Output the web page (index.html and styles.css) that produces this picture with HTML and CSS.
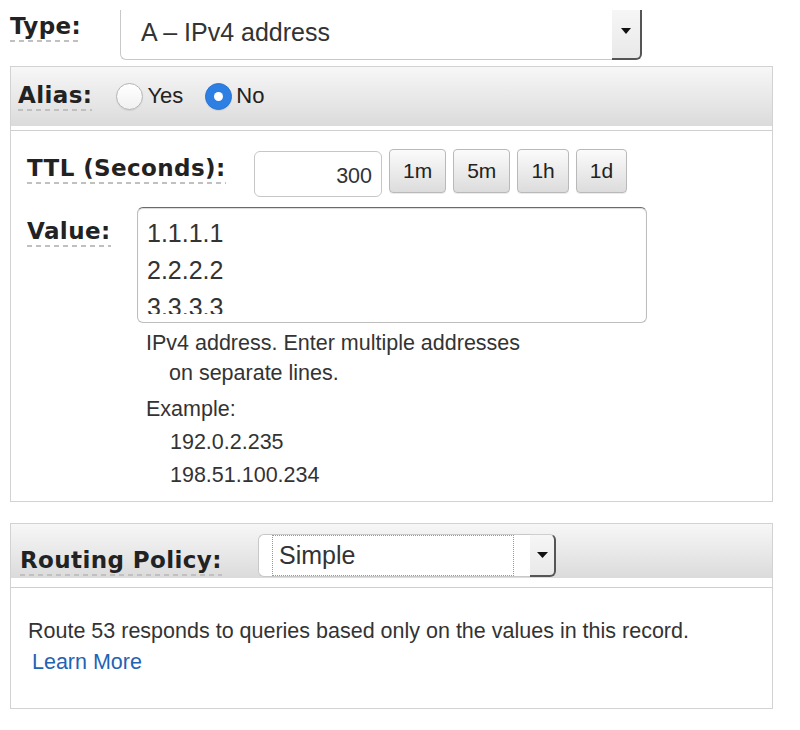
FILE: index.html
```html
<!DOCTYPE html>
<html>
<head>
<meta charset="utf-8">
<link rel="stylesheet" href="styles.css">
</head>
<body>
<div class="page">
  <div class="type-row">
    <div class="type-cell"><span class="label">Type:</span></div>
    <div class="select sel-type">
      <div class="sel-field"><span class="sel-text">A – IPv4 address</span></div>
      <div class="sel-arrow"><svg width="10" height="6" viewBox="0 0 10 6"><path d="M0 0H10L5 6Z" fill="#111"/></svg></div>
    </div>
  </div>

  <div class="panel panel-record">
    <div class="panel-head head-alias">
      <span class="label">Alias:</span>
      <div class="radios">
        <span class="radio"></span><span class="radio-text">Yes</span>
        <span class="radio checked"></span><span class="radio-text">No</span>
      </div>
    </div>
    <div class="panel-body body-record">
      <div class="ttl-row">
        <div class="ttl-cell"><span class="label">TTL (Seconds):</span></div>
        <div class="ttl-input">300</div>
        <button class="btn">1m</button>
        <button class="btn">5m</button>
        <button class="btn">1h</button>
        <button class="btn">1d</button>
      </div>
      <div class="value-row">
        <div class="value-cell"><span class="label">Value:</span></div>
        <div class="textarea">
          <div class="ta-clip">
            <div>1.1.1.1</div>
            <div>2.2.2.2</div>
            <div>3.3.3.3</div>
          </div>
        </div>
      </div>
      <div class="help">
        <div class="help-main">IPv4 address. Enter multiple addresses on separate lines.</div>
        <div class="help-example">
          <div>Example:</div>
          <div class="ex-line">192.0.2.235</div>
          <div class="ex-line">198.51.100.234</div>
        </div>
      </div>
    </div>
  </div>

  <div class="panel panel-routing">
    <div class="panel-head head-routing">
      <div class="routing-cell"><span class="label">Routing Policy:</span></div>
      <div class="select sel-routing">
        <div class="sel-field"><div class="focus-ring"><span class="sel-text">Simple</span></div></div>
        <div class="sel-arrow"><svg width="11" height="6" viewBox="0 0 11 6"><path d="M0 0H11L5.5 6Z" fill="#111"/></svg></div>
      </div>
    </div>
    <div class="panel-body body-routing">
      <div class="desc">Route 53 responds to queries based only on the values in this record.</div>
      <a class="learn" href="#">Learn More</a>
    </div>
  </div>
</div>
</body>
</html>
```
FILE: styles.css
```css
* { box-sizing: border-box; }
body {
  margin: 0;
  background: #fff;
  font-family: "Liberation Sans", Arial, sans-serif;
  color: #333;
}
.page { width: 800px; }

.label {
  display: inline-block;
  font-family: "DejaVu Sans", Verdana, sans-serif;
  font-weight: bold;
  font-size: 23px;
  letter-spacing: 0.4px;
  color: #222;
  line-height: 26px;
  padding-bottom: 3px;
  background-image: repeating-linear-gradient(to right, #c0c0c0 0 5px, transparent 5px 9px);
  background-size: 100% 2px;
  background-position: left bottom;
  background-repeat: no-repeat;
}

/* Type row */
.type-row {
  display: flex;
  align-items: flex-start;
  height: 60px;
  padding-left: 10px;
}
.type-cell { width: 110px; padding-top: 13px; }

.select { display: flex; }
.sel-field {
  flex: 1;
  display: flex;
  align-items: center;
  background: #fff;
  border: 1px solid #c8c8c8;
  border-right: none;
  border-radius: 6px 0 0 6px;
}
.sel-text { font-size: 25px; color: #333; }
.sel-arrow {
  display: flex;
  justify-content: center;
  background: linear-gradient(#f6f6f6, #e9e9e9);
  border-right: 2px solid #555;
  border-bottom: 2px solid #555;
  border-radius: 0 6px 6px 0;
}

.sel-type { margin-top: 10px; width: 522px; height: 50px; }
.sel-type .sel-field {
  border-top: none;
  border-radius: 0 0 0 6px;
  padding-left: 20px;
  padding-bottom: 4px;
}
.sel-type .sel-arrow {
  width: 30px;
  padding-top: 18px;
  border-radius: 0 0 6px 0;
}

/* Panels */
.panel {
  margin-left: 10px;
  width: 763px;
  border: 1px solid #d2d2d2;
}
.panel-record { margin-top: 6px; }
.panel-routing { margin-top: 21px; }
.panel-head {
  display: flex;
  background: linear-gradient(#f7f7f7, #dbdbdb);
  border-bottom: 4px solid #fff;
}
.panel-body { border-top: 1px solid #cfcfcf; }

.head-alias {
  height: 63px;
  align-items: center;
  padding-left: 7px;
  padding-bottom: 1px;
}
.radios {
  display: flex;
  align-items: center;
  margin-left: 24px;
}
.radio {
  width: 27px;
  height: 27px;
  border-radius: 50%;
  border: 1px solid #b5b5b5;
  background: linear-gradient(#ffffff, #f1f1f1);
  box-shadow: 0 1px 1px rgba(0,0,0,0.08);
  display: flex;
  align-items: center;
  justify-content: center;
}
.radio.checked {
  margin-left: 22px;
  background: #2d7fe3;
  border-color: #2a74d4;
}
.radio.checked::after {
  content: "";
  width: 9px;
  height: 9px;
  border-radius: 50%;
  background: #fff;
}
.radio-text { font-size: 22px; color: #222; margin-left: 4px; }

/* Record body */
.body-record { padding: 18px 0 9px 16px; }
.ttl-row { display: flex; align-items: flex-start; }
.ttl-cell { width: 227px; padding-top: 6px; }
.ttl-input {
  width: 128px;
  height: 46px;
  margin-top: 2px;
  border: 1px solid #c6c6c6;
  border-radius: 6px;
  text-align: right;
  padding: 4px 9px 0 0;
  font-size: 21.5px;
  line-height: 40px;
  color: #333;
}
.btn {
  height: 44px;
  margin: 0 0 0 7px;
  padding: 0 13px;
  border: 1px solid #b9b9b9;
  border-radius: 4px;
  background: linear-gradient(#fbfbfb, #dcdcdc);
  font-family: "Liberation Sans", Arial, sans-serif;
  font-size: 21px;
  color: #222;
  box-shadow: 0 1px 0 rgba(0,0,0,0.08);
}

.value-row { display: flex; align-items: flex-start; margin-top: 10px; }
.value-cell { width: 110px; padding-top: 11px; }
.textarea {
  width: 510px;
  height: 116px;
  border: 1px solid #bdbdbd;
  border-top-color: #6a6a6a;
  border-radius: 6px;
  box-shadow: inset 0 1px 1px rgba(0,0,0,0.15);
  padding: 0 9px;
}
.ta-clip {
  margin-top: 7px;
  height: 99px;
  overflow: hidden;
  font-size: 25px;
  line-height: 37px;
  color: #333;
}

.help {
  margin: 5px 0 0 119px;
  font-size: 21.5px;
  color: #333;
}
.help-main {
  width: 400px;
  line-height: 30px;
  padding-left: 23px;
  text-indent: -23px;
}
.help-example { margin-top: 5px; line-height: 33px; }
.ex-line { padding-left: 24px; }

/* Routing */
.head-routing {
  height: 63px;
  align-items: flex-start;
  padding-left: 9px;
  border-bottom-width: 9px;
}
.routing-cell { width: 238px; padding-top: 23px; }
.sel-routing { margin-top: 10px; height: 43px; }
.sel-routing .sel-field {
  width: 272px;
  flex: none;
  align-items: stretch;
  padding-left: 13px;
}
.focus-ring {
  width: 242px;
  border: 1px dotted #9a9a9a;
  display: flex;
  align-items: center;
  padding-left: 6px;
}
.sel-routing .sel-arrow {
  width: 26px;
  align-items: center;
  border-top: 1px solid #cfcfcf;
}

.body-routing { padding: 28px 0 30px 17px; font-size: 21.5px; line-height: 31px; }
.desc { color: #333; }
.learn {
  display: inline-block;
  margin-left: 4px;
  color: #1f63b5;
  text-decoration: none;
}
```
